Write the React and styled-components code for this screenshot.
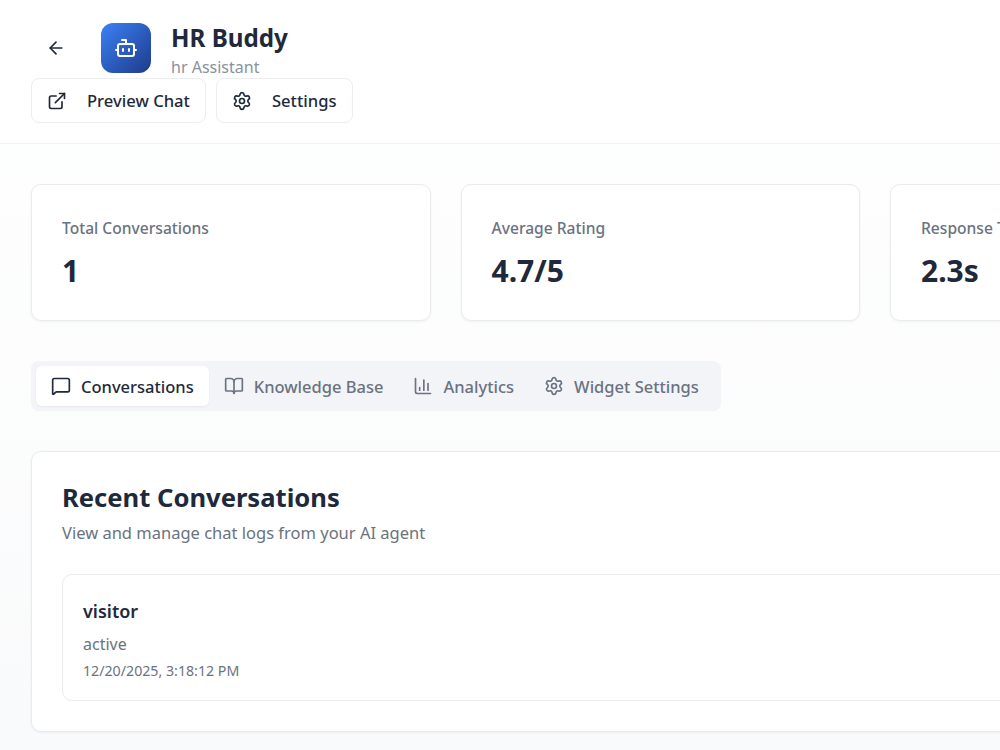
import React from 'react';
import styled, { createGlobalStyle } from 'styled-components';
import { ArrowLeft, Bot, ExternalLink, Settings, MessageSquare, BookOpen, ChartColumn } from 'lucide-react';

const Global = createGlobalStyle`
    html, body {
        margin: 0;
        height: 750px;
        overflow: hidden;
        background: #fff;
    }
    * { box-sizing: border-box; }
`;

const Page = styled.div`
    width: 1000px;
    height: 750px;
    overflow: hidden;
    font-family: "Noto Sans", "Open Sans", sans-serif;
    color: #1e293b;
    background: linear-gradient(180deg, #ffffff 0%, #f9fafb 100%);
`;

const Header = styled.header`
    height: 144px;
    padding: 23px 31px 0;
    border-bottom: 1px solid #f0f1f4;
    background: #fff;
`;

const TitleRow = styled.div`
    display: flex;
    align-items: flex-start;
    height: 55px;
`;

const BackButton = styled.button`
    width: 50px;
    height: 50px;
    margin-right: 20px;
    padding: 0;
    border: none;
    background: none;
    color: #1e293b;
    display: flex;
    align-items: center;
    justify-content: center;
`;

const Logo = styled.div`
    width: 50px;
    height: 50px;
    margin-right: 20px;
    border-radius: 12px;
    background: linear-gradient(135deg, #3b82f6, #1e3a8a);
    color: #fff;
    display: flex;
    align-items: center;
    justify-content: center;
`;

const Title = styled.h1`
    margin: 0;
    font-size: 24.2px;
    line-height: 30px;
    font-weight: 700;
    color: #1e293b;
`;

const Subtitle = styled.p`
    margin: 2px 0 0;
    font-size: 16px;
    line-height: 24px;
    color: #8a91a0;
`;

const Actions = styled.div`
    display: flex;
    gap: 10px;
`;

const ActionButton = styled.button`
    height: 45px;
    padding: 0 15px;
    display: flex;
    align-items: center;
    gap: 20px;
    background: #fff;
    border: 1px solid #eceef2;
    border-radius: 8px;
    font-family: inherit;
    font-size: 16.6px;
    font-weight: 500;
    color: #1e293b;
`;

const Main = styled.main`
    padding: 40px 0 0 31px;
`;

const Stats = styled.div`
    display: flex;
    gap: 30px;
    width: 1400px;
`;

const StatCard = styled.div`
    flex: 0 0 399.5px;
    height: 137px;
    padding: 30px;
    background: #fff;
    border: 1px solid #e9ebef;
    border-radius: 10px;
    box-shadow: 0 1px 3px rgba(0, 0, 0, 0.05);
`;

const StatLabel = styled.div`
    font-size: 15.6px;
    line-height: 26px;
    font-weight: 500;
    color: #6b7280;
`;

const StatValue = styled.div`
    margin-top: 10px;
    font-size: 30px;
    line-height: 40px;
    font-weight: 700;
    color: #1e293b;
`;

const Tabs = styled.div`
    display: flex;
    width: 690px;
    margin-top: 40px;
    height: 50px;
    padding: 5px;
    background: #f2f4f8;
    border-radius: 8px;
`;

const Tab = styled.div`
    display: flex;
    flex-shrink: 0;
    align-items: center;
    gap: 10px;
    padding: 0 15px;
    border-radius: 6px;
    font-size: 16.5px;
    font-weight: 500;
    white-space: nowrap;
    color: ${p => (p.$active ? '#1e293b' : '#6b7280')};
    background: ${p => (p.$active ? '#fff' : 'transparent')};
    box-shadow: ${p => (p.$active ? '0 1px 2px rgba(0,0,0,0.05)' : 'none')};
`;

const Panel = styled.section`
    margin-top: 40px;
    width: 1400px;
    height: 281px;
    padding: 30px;
    background: #fff;
    border: 1px solid #e9ebef;
    border-radius: 10px;
    box-shadow: 0 1px 3px rgba(0, 0, 0, 0.05);
`;

const PanelTitle = styled.h2`
    margin: -2px 0 0;
    font-size: 25.6px;
    line-height: 36px;
    font-weight: 700;
    color: #1e293b;
`;

const PanelText = styled.p`
    margin: 5px 0 0;
    font-size: 16.5px;
    line-height: 24px;
    color: #6b7280;
`;

const Conversation = styled.div`
    margin-top: 29px;
    height: 127px;
    padding: 20px;
    border: 1px solid #e9ebef;
    border-radius: 10px;
    background: #fff;
`;

const Visitor = styled.div`
    font-size: 18px;
    line-height: 32px;
    font-weight: 600;
    color: #1e293b;
`;

const Status = styled.div`
    margin-top: 4px;
    font-size: 16px;
    line-height: 26px;
    color: #6b7280;
`;

const Time = styled.div`
    margin-top: 3px;
    font-size: 14.2px;
    line-height: 22px;
    color: #6b7280;
`;

const stats = [
    { label: 'Total Conversations', value: '1' },
    { label: 'Average Rating', value: '4.7/5' },
    { label: 'Response Time', value: '2.3s' },
];

const tabs = [
    { label: 'Conversations', Icon: MessageSquare, active: true },
    { label: 'Knowledge Base', Icon: BookOpen },
    { label: 'Analytics', Icon: ChartColumn },
    { label: 'Widget Settings', Icon: Settings },
];

export default function App() {
    return (
        <Page>
            <Global />
            <Header>
                <TitleRow>
                    <BackButton><ArrowLeft size={20} /></BackButton>
                    <Logo><Bot size={24} /></Logo>
                    <div>
                        <Title>HR Buddy</Title>
                        <Subtitle>hr Assistant</Subtitle>
                    </div>
                </TitleRow>
                <Actions>
                    <ActionButton><ExternalLink size={20} />Preview Chat</ActionButton>
                    <ActionButton><Settings size={20} />Settings</ActionButton>
                </Actions>
            </Header>
            <Main>
                <Stats>
                    {stats.map(s => (
                        <StatCard key={s.label}>
                            <StatLabel>{s.label}</StatLabel>
                            <StatValue>{s.value}</StatValue>
                        </StatCard>
                    ))}
                </Stats>
                <Tabs>
                    {tabs.map(({ label, Icon, active }) => (
                        <Tab key={label} $active={active}><Icon size={20} />{label}</Tab>
                    ))}
                </Tabs>
                <Panel>
                    <PanelTitle>Recent Conversations</PanelTitle>
                    <PanelText>View and manage chat logs from your AI agent</PanelText>
                    <Conversation>
                        <Visitor>visitor</Visitor>
                        <Status>active</Status>
                        <Time>12/20/2025, 3:18:12 PM</Time>
                    </Conversation>
                </Panel>
            </Main>
        </Page>
    );
}
